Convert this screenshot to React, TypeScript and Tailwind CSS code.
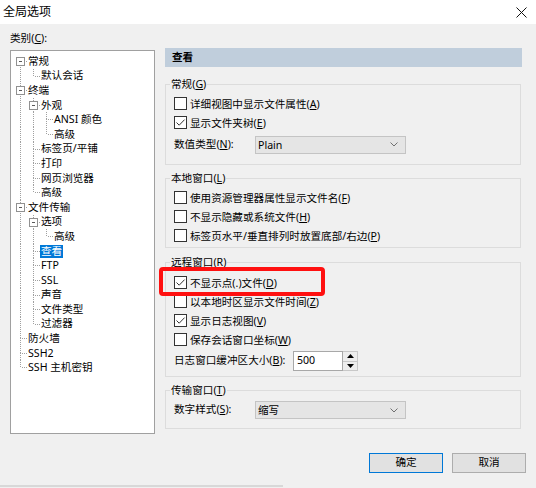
import React from 'react';

type TreeNode = { label: string; level: number; expander?: boolean; selected?: boolean };

const tree: TreeNode[] = [
  { label: '常规', level: 0, expander: true },
  { label: '默认会话', level: 1 },
  { label: '终端', level: 0, expander: true },
  { label: '外观', level: 1, expander: true },
  { label: 'ANSI 颜色', level: 2 },
  { label: '高级', level: 2 },
  { label: '标签页/平铺', level: 1 },
  { label: '打印', level: 1 },
  { label: '网页浏览器', level: 1 },
  { label: '高级', level: 1 },
  { label: '文件传输', level: 0, expander: true },
  { label: '选项', level: 1, expander: true },
  { label: '高级', level: 2 },
  { label: '查看', level: 1, selected: true },
  { label: 'FTP', level: 1 },
  { label: 'SSL', level: 1 },
  { label: '声音', level: 1 },
  { label: '文件类型', level: 1 },
  { label: '过滤器', level: 1 },
  { label: '防火墙', level: 0 },
  { label: 'SSH2', level: 0 },
  { label: 'SSH 主机密钥', level: 0 },
];

// does the node at (or above) row i on this level have a sibling further down
const hasNext = (i: number, lvl: number) => {
  for (let j = i + 1; j < tree.length; j++) {
    if (tree[j].level < lvl) return false;
    if (tree[j].level === lvl) return true;
  }
  return false;
};

const dot = { stroke: '#a0a0a0', strokeDasharray: '1 1', strokeWidth: 1 };

const Guide = ({ pipe, own, up, down, box }: { pipe?: boolean; own?: boolean; up?: boolean; down?: boolean; box?: boolean }) => (
  <svg width="13" height="14.6" viewBox="0 0 13 14.6" className="shrink-0" shapeRendering="crispEdges">
    {pipe && <line x1="6.5" y1="0" x2="6.5" y2="14.6" {...dot} />}
    {own && up && <line x1="6.5" y1="0" x2="6.5" y2="7.5" {...dot} />}
    {own && down && <line x1="6.5" y1="7.5" x2="6.5" y2="14.6" {...dot} />}
    {own && <line x1="6.5" y1="7.5" x2="13" y2="7.5" {...dot} />}
    {box && (
      <>
        <rect x="2.5" y="3.5" width="8" height="8" fill="#fff" stroke="#919191" />
        <line x1="4.5" y1="7.5" x2="8.5" y2="7.5" stroke="#5a5a5a" />
      </>
    )}
  </svg>
);

const Mn = ({ k }: { k: string }) => (
  <>
    (<u className="underline-offset-[1px]">{k}</u>)
  </>
);

const Check = ({ checked, children }: { checked?: boolean; children: React.ReactNode }) => (
  <div className="flex h-[19px] items-center">
    <span className="flex h-[13px] w-[13px] shrink-0 items-center justify-center border border-[#333333] bg-white">
      {checked && (
        <svg width="11" height="11" viewBox="0 0 11 11">
          <path d="M1.5 5.5 L4.2 8.2 L9.6 2.6" fill="none" stroke="#333" strokeWidth="1" />
        </svg>
      )}
    </span>
    <span className="ml-[3px] leading-[14px] whitespace-nowrap">{children}</span>
  </div>
);

const Select = ({ value }: { value: string }) => (
  <div className="flex h-[18px] w-[151px] items-center justify-between border border-[#c4c4c4] bg-[#e5e5e5] pl-[2px] pr-[7px]">
    <span className="leading-[14px]">{value}</span>
    <svg width="8" height="5" viewBox="0 0 8 5">
      <path d="M0.5 0.5 L4 4 L7.5 0.5" fill="none" stroke="#707070" />
    </svg>
  </div>
);

const Group = ({ title, children, className }: { title: React.ReactNode; children: React.ReactNode; className: string }) => (
  <fieldset className={`w-[356px] border border-[#dcdcdc] ${className}`}>
    <legend className="ml-[4px] px-[1px] leading-[14px]">{title}</legend>
    <div className="pl-[8px]">{children}</div>
  </fieldset>
);

export default function App() {
  return (
    <div className="relative flex h-[488px] w-[536px] flex-col overflow-hidden bg-[#f0f0f0] font-['Noto_Sans','Noto_Sans_CJK_SC',sans-serif] text-[10.6px] text-black">
      {/* title bar */}
      <div className="flex h-[24px] shrink-0 items-center justify-between bg-white pl-[3px] pr-[9px]">
        <span className="text-[12px] leading-[16px]">全局选项</span>
        <svg width="11" height="11" viewBox="0 0 11 11">
          <path d="M0.5 0.5 L10.5 10.5 M10.5 0.5 L0.5 10.5" stroke="#111" strokeWidth="1" />
        </svg>
      </div>

      <div className="flex items-start gap-[10px] px-[10px]">
        {/* category tree */}
        <div className="w-[145px] shrink-0">
          <div className="mt-[7px] h-[14px] leading-[14px]">
            类别<Mn k="C" />:
          </div>
          <div className="mt-[5px] h-[384px] border border-[#a0a0a0] bg-white pl-[3px] pt-[3px]">
            {tree.map((n, i) => (
              <div key={i} className="flex h-[14.6px] items-center">
                {Array.from({ length: n.level }).map((_, c) => (
                  <Guide key={c} pipe={hasNext(i, c)} />
                ))}
                <Guide own up={i !== 0} down={hasNext(i, n.level)} box={n.expander} />
                <span className={`px-[1px] leading-[13px] whitespace-nowrap ${n.selected ? 'bg-[#0078d7] text-white' : ''}`}>
                  {n.label}
                </span>
              </div>
            ))}
          </div>
        </div>

        {/* settings page */}
        <div className="w-[357px] pt-[24px]">
          <div className="flex h-[19px] items-center bg-[#c0cedc] pl-[7px] font-bold">查看</div>

          <Group title={<>常规<Mn k="G" /></>} className="mt-[10px] pb-[7px] pt-[3px]">
            <Check>详细视图中显示文件属性<Mn k="A" /></Check>
            <Check checked>显示文件夹树<Mn k="E" /></Check>
            <div className="flex h-[25px] items-center">
              <span className="w-[81px]">数值类型<Mn k="N" />:</span>
              <Select value="Plain" />
            </div>
          </Group>

          <Group title={<>本地窗口<Mn k="L" /></>} className="mt-[6px] pb-[2px] pt-[3px]">
            <Check>使用资源管理器属性显示文件名<Mn k="F" /></Check>
            <Check>不显示隐藏或系统文件<Mn k="H" /></Check>
            <Check>标签页水平/垂直排列时放置底部/右边<Mn k="P" /></Check>
          </Group>

          <Group title={<>远程窗口<Mn k="R" /></>} className="mt-[7px] pb-[3px] pt-[4px]">
            <Check checked>不显示点(.)文件<Mn k="D" /></Check>
            <Check>以本地时区显示文件时间<Mn k="Z" /></Check>
            <Check checked>显示日志视图<Mn k="V" /></Check>
            <Check>保存会话窗口坐标<Mn k="W" /></Check>
            <div className="flex h-[24px] items-center">
              <span className="w-[119px] whitespace-nowrap">日志窗口缓冲区大小<Mn k="B" />:</span>
              <div className="flex h-[20px] w-[50px] items-center border border-[#a8a8a8] bg-white pl-[3px]">500</div>
              <div className="flex h-[20px] w-[15px] flex-col border-y border-r border-[#c8c8c8] bg-[#ededed]">
                <div className="flex flex-1 items-center justify-center border-b border-[#c8c8c8]">
                  <svg width="7" height="4" viewBox="0 0 7 4"><path d="M0 4 L3.5 0 L7 4 Z" fill="#000" /></svg>
                </div>
                <div className="flex flex-1 items-center justify-center">
                  <svg width="7" height="4" viewBox="0 0 7 4"><path d="M0 0 L3.5 4 L7 0 Z" fill="#000" /></svg>
                </div>
              </div>
            </div>
          </Group>

          <Group title={<>传输窗口<Mn k="T" /></>} className="mt-[6px] pb-[7px] pt-[2px]">
            <div className="flex h-[22px] items-center">
              <span className="w-[81px]">数字样式<Mn k="S" />:</span>
              <Select value="缩写" />
            </div>
          </Group>
        </div>
      </div>

      {/* dialog buttons */}
      <div className="mt-[19px] flex justify-end gap-[9px] pr-[10px]">
        <button className="flex h-[20px] w-[74px] items-center justify-center border border-[#0078d7] bg-[#e1e1e1]">确定</button>
        <button className="flex h-[20px] w-[74px] items-center justify-center border border-[#adadad] bg-[#e1e1e1]">取消</button>
      </div>
      <div className="mt-[12px] h-[2px] w-[283px] bg-[#d8d8d8]" />

      {/* red annotation */}
      <div className="absolute left-[159px] top-[267px] h-[29px] w-[166px] rounded-[4px] border-[4px] border-[#ff1010]" />
    </div>
  );
}
